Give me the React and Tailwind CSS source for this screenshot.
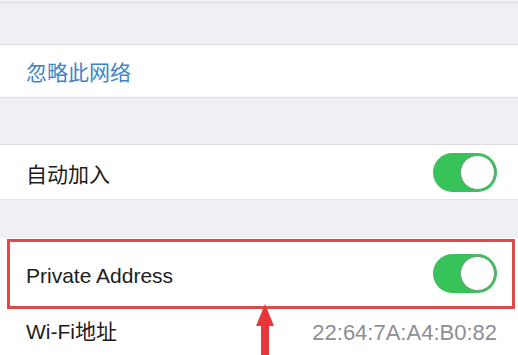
import React from 'react';

const Toggle = () => (
    <div className="w-[64px] h-[39px] rounded-full bg-[#37c25a] flex items-center justify-end p-[2px]">
        <div className="w-[35px] h-[35px] rounded-full bg-white border border-[#6a9a74]" />
    </div>
);

const App = () => {
    return (
        <div
            className="relative w-[518px] h-[355px] overflow-hidden bg-[#efeff4]"
            style={{ fontFamily: '"Liberation Sans", "Noto Sans CJK SC", sans-serif' }}
        >
            <div className="h-[3px] border-b border-[#d9d9de]" />
            <div className="h-[42px] border-b border-[#dcdce0]" />

            <div className="h-[53px] bg-white border-b border-[#dcdce0] flex items-center pl-[26px] pt-[4px]">
                <span className="text-[21px] text-[#3f84c6]">忽略此网络</span>
            </div>

            <div className="h-[47px] border-b border-[#dcdce0]" />

            <div className="h-[55px] bg-white border-b border-[#e2e2e6] flex items-center justify-between pl-[26px] pr-[21px]">
                <span className="text-[21px] text-[#1c1c1e] pt-[5px]">自动加入</span>
                <Toggle />
            </div>

            <div className="h-[38px]" />

            <div className="relative bg-white">
                <div className="h-[71px] flex items-center justify-between pl-[26px] pr-[21px]">
                    <span className="text-[21px] text-[#1c1c1e] pt-[5px]">Private Address</span>
                    <Toggle />
                </div>
                <div className="h-[46px] flex items-center justify-between pl-[26px] pr-[21px]">
                    <span className="text-[21px] text-[#1c1c1e]">Wi-Fi地址</span>
                    <span className="text-[22px] text-[#8e8e93]">22:64:7A:A4:B0:82</span>
                </div>

                {/* annotation box */}
                <div className="absolute left-[7px] right-[3px] top-[1px] h-[70px] border-[3px] border-[#dc4a4a]" />
            </div>

            {/* annotation arrow */}
            <svg className="absolute left-[255px] top-[304px]" width="20" height="52" viewBox="0 0 20 52">
                <polygon points="10,0 19,22 1,22" fill="#e8373a" />
                <rect x="6" y="20" width="8" height="32" fill="#e8373a" />
            </svg>
        </div>
    );
};

export default App;
